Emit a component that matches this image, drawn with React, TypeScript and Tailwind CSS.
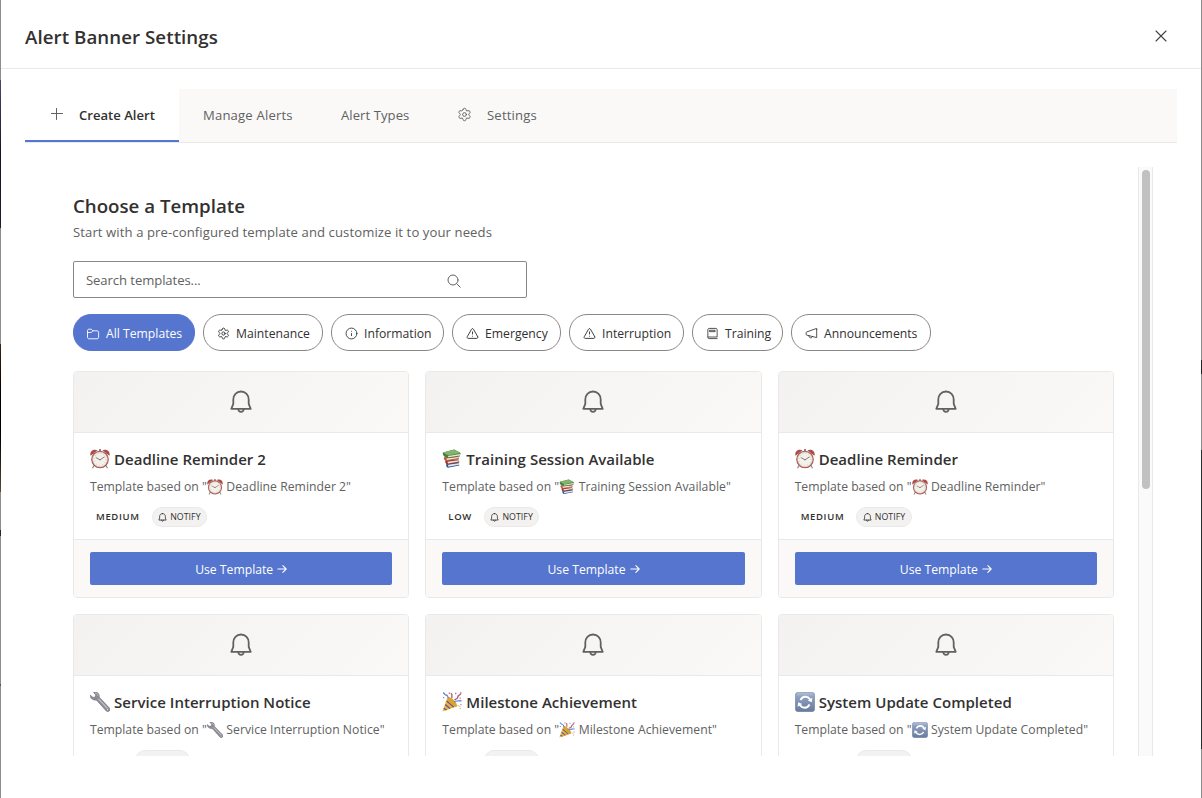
import React from "react";
import { Settings, Info, TriangleAlert } from "lucide-react";

type IconProps = { className?: string };

const stroke = {
  fill: "none",
  stroke: "currentColor",
  strokeLinecap: "round" as const,
  strokeLinejoin: "round" as const,
};

function Bell({ className, weight }: IconProps & { weight: number }) {
  return (
    <svg viewBox="0 0 24 24" className={className} {...stroke} strokeWidth={weight}>
      <path d="M12 1.500c4.600 0 7.700 3.400 7.700 7.900v4.400l2 5H2.300l2-5V9.400c0-4.500 3.100-7.900 7.700-7.900z" />
      <path d="M9.200 19c.2 1.700 1.300 2.900 2.800 2.900s2.600-1.200 2.800-2.900" />
    </svg>
  );
}

function FolderIcon({ className }: IconProps) {
  return (
    <svg viewBox="0 0 14 14" className={className} {...stroke} strokeWidth=".9">
      <path d="M1.500 3.600c0-.8.600-1.400 1.400-1.400h2.300l1.700 1.600h4.300c.8 0 1.400.6 1.400 1.400v5.200c0 .8-.6 1.400-1.400 1.400H2.900c-.8 0-1.400-.6-1.400-1.400z" />
      <path d="M1.500 5.500h3.300c.5 0 .8-.2 1.100-.5l1-1.200" />
    </svg>
  );
}

function BookIcon({ className }: IconProps) {
  return (
    <svg viewBox="0 0 14 14" className={className} {...stroke} strokeWidth=".9">
      <path d="M12 12.500H3.400c-.8 0-1.400-.6-1.400-1.300V2.800c0-.7.600-1.300 1.300-1.300h7.400c.7 0 1.300.6 1.300 1.300v8H2.300" />
      <path d="M4.200 3.500h5.600v1.500H4.200z" />
    </svg>
  );
}

function MegaphoneIcon({ className }: IconProps) {
  return (
    <svg viewBox="0 0 14 14" className={className} {...stroke} strokeWidth=".9">
      <path d="M12.600 2.200v9.200L1.800 8.700c-.4-.1-.6-.4-.6-.8V6.200c0-.4.200-.7.600-.8l9.900-3.600c.5-.1.900 0 .9.400z" />
      <path d="M4.200 9.400c0 1.400.8 2.300 1.900 2.300s1.900-.7 2-1.400" />
    </svg>
  );
}

function ClockEmoji() {
  return (
    <svg viewBox="0 0 20 20" className="size-full">
      <path d="M4 16.500 2.500 19.300M16 16.500l1.500 2.800" stroke="#8d9292" strokeWidth="1.300" />
      <path d="M.6 6.800C-.8 3 3-.8 7.600 1.200zM19.400 6.800c1.400-3.800-2.400-7.600-7-5.600z" fill="#a94b47" />
      <path d="M9.200 0h1.600v3H9.200z" fill="#8a6460" />
      <circle cx="10" cy="10.500" r="8.800" fill="#ad514b" />
      <circle cx="10" cy="10.500" r="7.400" fill="#f3f1ea" stroke="#cfc8bf" strokeWidth=".6" />
      <circle cx="10" cy="10.500" r="5.900" fill="none" stroke="#aeaca6" strokeWidth=".8" strokeDasharray=".6 2.490" />
      <path d="m5.800 8.500 4.200 2.300 4.600-3" fill="none" stroke="#555" strokeWidth=".7" />
      <circle cx="10" cy="10.700" r=".7" fill="#777" />
    </svg>
  );
}

function BooksEmoji() {
  return (
    <svg viewBox="0 0 20 20" className="size-full">
      <path d="m4.500 14.500 12-1.500.8 3.600-11.300 2.200c-1.800-.3-2.300-3-1.500-4.300z" fill="#31558e" />
      <path d="m5.800 15.800 11-1.500.3 1.500L6.500 17.800z" fill="#dfe5ea" />
      <path d="m3.500 11.300 12.800-1.100 1.200 3-11.800 2.300c-2.300-.3-3-2.700-2.200-4.200z" fill="#93392f" />
      <path d="m5.500 12.700 11-1.400.5 1.200-11 1.900z" fill="#f0e7df" />
      <path d="m2 8.200 14-1.400 1.200 2.900-12.300 2.500C2.200 11.600 1.300 9.700 2 8.200z" fill="#c45744" />
      <path d="m4.300 9.500 12-1.500.5 1.100-11.700 2z" fill="#eee8d9" />
      <path d="M1 3.500 12.200.6l6.400 3.400-.8 3.400L5.500 9C1.500 7.800.2 5.500 1 3.500z" fill="#47803f" />
      <path d="M1 3.500 12.200.6l6.400 3.400-12.300 2.500z" fill="#82b46b" />
      <path d="m6 7.100 12.200-2.200-.3 1.600L6.300 8.200z" fill="#ece9d8" />
    </svg>
  );
}

function WrenchEmoji() {
  return (
    <svg viewBox="0 0 20 20" className="size-full">
      <path
        d="M3.600.4c2-.9 5 .2 5.500 2.500.2 1.100 0 2 .4 2.600l9.700 10.300c.9 1 .8 2.300 0 3.200-.8.800-2.200.8-3.100-.2L6.900 8.500c-.6-.5-1.500-.2-2.600-.5C1.900 7.500 0 5.700.2 3.200l2.800 2.200 2.300-.3.500-2.200z"
        fill="#8e8e96"
        stroke="#666873"
        strokeWidth=".6"
      />
      <path d="m8.500 6.800 9.200 9.800" stroke="#c5c4cb" strokeWidth="1.200" />
      <path d="M5 1c1.800 0 3 1 3 2.800" fill="none" stroke="#c6c9d3" strokeWidth=".8" />
      <circle cx="17.600" cy="17.500" r=".9" fill="#fff" stroke="#555" strokeWidth=".4" />
    </svg>
  );
}

function PartyEmoji() {
  return (
    <svg viewBox="0 0 20 20" className="size-full">
      <path d="M.5 19.500 5.300 5.500c3.600.6 8.200 5 9.600 9.100z" fill="#e1b83e" />
      <path d="M1.700 16.400 4.600 18M3.200 12.600l4.800 4M4.700 8.900l7 6.200" stroke="#7c4c98" strokeWidth="1.300" />
      <ellipse cx="10.200" cy="9.900" rx="6.300" ry="2.400" transform="rotate(45 10.200 9.900)" fill="#d8a52f" />
      <path d="M1 1c2 0 1 2 3 2s1.500 2 2.500 3" fill="none" stroke="#6083d4" strokeWidth="1.300" />
      <path d="M9 1.500c2 1 .2 2.300 1 4.500" fill="none" stroke="#c35970" strokeWidth="1.400" />
      <path d="M12.500 8.200c1-2 3-.6 3.200-3 .1-2 1.800-1.500 3-3.500" fill="none" stroke="#b4677a" strokeWidth="1.500" />
      <path d="M12 10c2-1.500 4-.8 7.500-1.500" fill="none" stroke="#668bdc" strokeWidth="1.400" />
      <path d="M15.500 13.500c1.500 0 3 .8 2.700 3.500" fill="none" stroke="#cba47f" strokeWidth="1" strokeDasharray="1.200 .8" />
      <path d="M6.700.5h1.500v1.500H6.700zM13 .8h1.400v1.400H13zM18 .2h1.500v1.500H18zM1 5h1.300v1.300H1zM18.300 12h1.200v1.200h-1.200zM17.500 5.500h1.200v1.200h-1.200z" fill="#b9799a" />
    </svg>
  );
}

function SyncEmoji() {
  return (
    <svg viewBox="0 0 20 20" className="size-full">
      <defs>
        <linearGradient id="sync-fill" x1="0" y1="0" x2="0" y2="1">
          <stop offset="0" stopColor="#b5c2d8" />
          <stop offset=".25" stopColor="#8c9dbe" />
          <stop offset="1" stopColor="#687b9d" />
        </linearGradient>
      </defs>
      <rect x=".3" y=".3" width="19.400" height="19.400" rx="3" fill="url(#sync-fill)" stroke="#71829f" strokeWidth=".6" />
      <path d="M5.500 8c2-4 7-4.300 9.700-.5M14.500 12.500c-2 4-7 4.300-9.700.5" fill="none" stroke="#fff" strokeWidth="2" />
      <path d="m17.400 5.800-.6 4.400-4-1.800zM2.600 14.700l.6-4.400 4 1.800z" fill="#fff" />
    </svg>
  );
}

type Template = {
  name: string;
  emoji: () => React.JSX.Element;
  priority: string;
};

const templates: Template[] = [
  { name: "Deadline Reminder 2", emoji: ClockEmoji, priority: "MEDIUM" },
  { name: "Training Session Available", emoji: BooksEmoji, priority: "LOW" },
  { name: "Deadline Reminder", emoji: ClockEmoji, priority: "MEDIUM" },
  { name: "Service Interruption Notice", emoji: WrenchEmoji, priority: "HIGH" },
  { name: "Milestone Achievement", emoji: PartyEmoji, priority: "LOW" },
  { name: "System Update Completed", emoji: SyncEmoji, priority: "MEDIUM" },
];

function TemplateCard({ t }: { t: Template }) {
  const Emoji = t.emoji;
  return (
    <article className="flex h-[227px] flex-col overflow-hidden rounded-[4px] border border-[#e9e9e9] bg-white">
      <div className="flex h-[61px] shrink-0 items-center justify-center border-b border-[#e9e9e9] bg-linear-135 from-[#f3f2f1] to-[#faf9f8] text-[#616161]">
        <Bell className="size-6" weight={1.8} />
      </div>
      <div className="h-[106px] shrink-0 px-4 pt-[15px] whitespace-nowrap">
        <h3 className="flex h-[22px] items-center gap-1 text-[15px] font-semibold text-[#323130]">
          <span className="size-5 shrink-0"><Emoji /></span>
          <span className="tracking-[0.03px]">{t.name}</span>
        </h3>
        <p className="mt-[7px] flex h-[20px] items-center text-[12.2px] text-[#616161]">
          <span>Template based on "</span>
          <span className="mr-[3.500px] size-4 shrink-0"><Emoji /></span>
          <span className="tracking-[0.03px]">{t.name}"</span>
        </p>
        <div className="mt-[10px] flex h-5 items-center gap-3 pl-[6px] text-[#323130]">
          <span className="pt-px text-[9.500px] font-semibold tracking-[0.65px]">{t.priority}</span>
          <span className="flex h-5 w-[55.500px] items-center justify-center gap-[3px] rounded-[10px] border border-[#e9e9e9] bg-[#f3f2f1]">
            <Bell className="size-[9px]" weight={2.2} />
            <span className="pt-px text-[8.800px] tracking-[0.03px]">NOTIFY</span>
          </span>
        </div>
      </div>
      <div className="h-[59px] shrink-0 border-t border-[#e9e9e9] bg-[#faf9f8] px-4 pt-3">
        <button className="flex h-[33px] w-full items-center justify-center gap-1 rounded-[2px] bg-[#5575ce] text-[12.2px] text-white">
          <span className="pt-[3px]">Use Template</span>
          <svg viewBox="0 0 12 12" className="mt-px size-[10px]" {...stroke} strokeWidth="1.300">
            <path d="M1 6h10M7 2l4 4-4 4" />
          </svg>
        </button>
      </div>
    </article>
  );
}

function Chip({ icon, label, width, active }: { icon: React.ReactNode; label: string; width: string; active?: boolean }) {
  return (
    <button
      className={`flex h-[37px] shrink-0 items-center rounded-[18px] border pl-[12px] text-[12.2px] ${width} ${
        active ? "border-[#5575ce] bg-[#5575ce] text-white" : "border-[#8a8886] bg-white text-[#323130]"
      }`}
    >
      <span className="mt-[2px] flex w-[14px] shrink-0 justify-center">{icon}</span>
      <span className="ml-[6px] pt-[3px] whitespace-nowrap">{label}</span>
    </button>
  );
}

export default function App() {
  return (
    <div className="flex h-[798px] w-[1202px] overflow-hidden bg-white font-['Open_Sans','Noto_Sans',sans-serif] text-[#323130]">
      <div className="flex w-px shrink-0 flex-col bg-[#8c8c8c]">
        <div className="h-[80px]" />
        <div className="h-[148px] bg-linear-to-b from-[#49496c] via-[#161329] to-[#1e1b33]" />
        <div className="h-[116px]" />
        <div className="h-[148px] bg-linear-to-b from-[#3c2415] via-[#000000] to-[#594a3c]" />
        <div className="h-[38px]" />
        <div className="h-[6px] bg-[#2a2522]" />
        <div className="h-[148px]" />
        <div className="h-[2px] bg-[#555555]" />
      </div>
      <main className="flex min-w-0 grow flex-col">
        <header className="flex h-[69px] shrink-0 items-center justify-between border-b border-[#e9e9e9] pr-[34px] pl-6">
          <h1 className="mt-[6px] text-[18.700px] font-semibold tracking-[0.06px] whitespace-nowrap">Alert Banner Settings</h1>
          <svg viewBox="0 0 12 12" className="mt-[4px] size-3 text-[#424242]" {...stroke} strokeWidth="1.100">
            <path d="m1 1 10 10M11 1 1 11" />
          </svg>
        </header>
        <nav className="mx-6 mt-5 flex h-[54px] shrink-0 border-b border-[#e9e9e9] bg-[#faf9f8] text-[13.100px] whitespace-nowrap text-[#616161]">
          <button className="flex h-[53px] w-[154px] items-center border-b-2 border-[#5575ce] bg-white pl-[26px] font-semibold text-[#323130]">
            <svg viewBox="0 0 12 12" className="mb-[2px] size-3 text-[#616161]" {...stroke}>
              <path d="M5.500 .5v11M0 5.500h11.500" />
            </svg>
            <span className="ml-4 pt-[2px]">Create Alert</span>
          </button>
          <button className="flex w-[138px] items-center pl-6 tracking-[0.18px]">Manage Alerts</button>
          <button className="flex w-[116px] items-center pl-6 tracking-[0.06px]">Alert Types</button>
          <button className="flex items-center pl-6">
            <Settings className="mb-[3px] size-[15px]" strokeWidth={1.5} />
            <span className="ml-[15px] tracking-[0.18px]">Settings</span>
          </button>
        </nav>
        <div className="mt-6 mr-[48px] flex h-[589px] shrink-0 overflow-hidden">
          <section className="w-[1137px] shrink-0 pr-6 pl-[72px]">
            <h2 className="mt-[25px] h-7 text-[18.700px] leading-7 font-semibold">Choose a Template</h2>
            <p className="mt-[2px] h-5 text-[13.100px] leading-5 tracking-[0.095px] text-[#616161]">
              Start with a pre-configured template and customize it to your needs
            </p>
            <div className="mt-[19px] flex h-[37px] w-[454px] items-center justify-between rounded-[2px] border border-[#8a8886] pr-[65px] pl-3 text-[13.100px] text-[#616161]">
              <span className="pt-[2px] tracking-[-0.08px]">Search templates...</span>
              <svg viewBox="0 0 14 14" className="mt-[2px] size-[14px]" {...stroke}>
                <circle cx="6" cy="6" r="5" />
                <path d="m9.700 9.700 3.500 3.500" />
              </svg>
            </div>
            <div className="mt-4 flex gap-2">
              <Chip active width="w-[122px]" label="All Templates" icon={<FolderIcon className="size-[14px]" />} />
              <Chip width="w-[120px]" label="Maintenance" icon={<Settings className="size-[13px]" strokeWidth={1.7} />} />
              <Chip width="w-[113px]" label="Information" icon={<Info className="size-[13px]" strokeWidth={1.6} />} />
              <Chip width="w-[109px]" label="Emergency" icon={<TriangleAlert className="size-[13px]" strokeWidth={1.7} />} />
              <Chip width="w-[115px]" label="Interruption" icon={<TriangleAlert className="size-[13px]" strokeWidth={1.7} />} />
              <Chip width="w-[91px]" label="Training" icon={<BookIcon className="size-[13px]" />} />
              <Chip width="w-[140px]" label="Announcements" icon={<MegaphoneIcon className="size-[13px]" />} />
            </div>
            <div className="mt-5 grid grid-cols-3 gap-4">
              {templates.map((t) => (
                <TemplateCard key={t.name} t={t} />
              ))}
            </div>
          </section>
          <div className="flex w-[15px] shrink-0 justify-center border-x border-[#e9e9e9] bg-[#fafafa] pt-[3px]">
            <div className="h-[319px] w-2 rounded-full bg-[#c1c1c1]" />
          </div>
        </div>
      </main>
      <div className="flex w-px shrink-0 flex-col bg-[#8c8c8c]">
        <div className="h-[360px]" />
        <div className="h-[14px] bg-[#222222]" />
        <div className="h-[76px]" />
        <div className="h-[299px] bg-[#28302f]" />
      </div>
    </div>
  );
}
